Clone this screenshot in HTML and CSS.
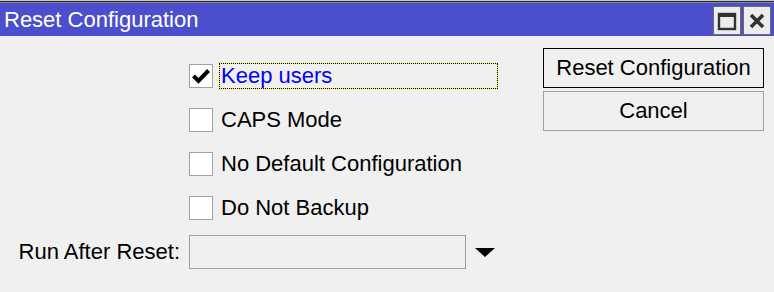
FILE: index.html
```html
<!DOCTYPE html>
<html lang="en">
<head>
    <meta charset="UTF-8">
    <meta name="viewport" content="width=device-width, initial-scale=1.0">
    <title>Reset Configuration</title>
    <link rel="stylesheet" href="styles.css">
</head>
<body>
    <div class="window">
        <div class="window-edge"></div>
        <div class="title-bar">
            <span class="title-text">Reset Configuration</span>
            <div class="title-buttons">
                <button class="title-button">
                    <svg width="20" height="20" viewBox="0 0 20 20">
                        <rect x="2" y="3" width="16" height="15" fill="none" stroke="#333" stroke-width="2.4"/>
                        <rect x="1" y="2" width="18" height="4" fill="#333"/>
                    </svg>
                </button>
                <button class="title-button">
                    <svg width="20" height="20" viewBox="0 0 20 20">
                        <path d="M4 4 L16 16 M16 4 L4 16" stroke="#333" stroke-width="3.6"/>
                    </svg>
                </button>
            </div>
        </div>

        <div class="window-body">
            <div class="form">
                <div class="form-row">
                    <span class="form-label"></span>
                    <div class="check-item">
                        <span class="check-box">
                            <svg width="18" height="18" viewBox="0 0 18 18">
                                <path d="M1.5 9 L6.5 14 L16.5 3.5" fill="none" stroke="#000" stroke-width="4"/>
                            </svg>
                        </span>
                        <span class="check-label focused">Keep users</span>
                    </div>
                </div>
                <div class="form-row">
                    <span class="form-label"></span>
                    <div class="check-item">
                        <span class="check-box"></span>
                        <span class="check-label">CAPS Mode</span>
                    </div>
                </div>
                <div class="form-row">
                    <span class="form-label"></span>
                    <div class="check-item">
                        <span class="check-box"></span>
                        <span class="check-label">No Default Configuration</span>
                    </div>
                </div>
                <div class="form-row">
                    <span class="form-label"></span>
                    <div class="check-item">
                        <span class="check-box"></span>
                        <span class="check-label">Do Not Backup</span>
                    </div>
                </div>
                <div class="form-row">
                    <span class="form-label">Run After Reset:</span>
                    <div class="select-item">
                        <div class="select-field"></div>
                        <span class="select-arrow"></span>
                    </div>
                </div>
            </div>

            <div class="actions">
                <button class="action-button primary">Reset Configuration</button>
                <button class="action-button">Cancel</button>
            </div>
        </div>
    </div>
</body>
</html>
```

FILE: styles.css
```css
body {
    margin: 0;
    font-family: "Liberation Sans", Arial, sans-serif;
    font-size: 22px;
    background-color: #f0f0f0;
    color: #000;
}

.window {
    width: 774px;
    height: 292px;
    overflow: hidden;
}

.window-edge {
    height: 3px;
    background: linear-gradient(#c8c8c8 0 1px, #2a2a2a 1px 2px, #8a8a8a 2px 3px);
}

.title-bar {
    height: 33px;
    background-color: #4b4fcd;
    display: flex;
    align-items: center;
    justify-content: space-between;
    padding-left: 4px;
}

.title-text {
    color: #fff;
    font-size: 22px;
}

.title-buttons {
    display: flex;
    gap: 2px;
    padding-right: 3px;
    padding-top: 2px;
}

.title-button {
    width: 28px;
    height: 29px;
    padding: 0;
    border: 1px solid #6b6b6b;
    background-color: #ededed;
    display: flex;
    align-items: center;
    justify-content: center;
}

.window-body {
    display: flex;
    justify-content: space-between;
}

.form {
    padding-top: 18px;
}

.form-row {
    display: grid;
    grid-template-columns: 180px auto;
    column-gap: 9px;
    height: 44px;
    align-items: center;
}

.form-label {
    text-align: right;
}

.check-item {
    display: flex;
    align-items: center;
    gap: 6px;
}

.check-box {
    width: 22px;
    height: 22px;
    border: 1px solid #a0a0a0;
    background-color: #fff;
    display: flex;
    align-items: center;
    justify-content: center;
}

.check-label {
    display: block;
    height: 24px;
    line-height: 24px;
    padding-left: 1px;
    border: 1px solid transparent;
}

.check-label.focused {
    width: 276px;
    color: #0000ff;
    border-color: #ffff00;
    outline: 1px dotted #000;
    outline-offset: -1px;
}

.select-item {
    display: flex;
    align-items: center;
    gap: 9px;
}

.select-field {
    width: 275px;
    height: 32px;
    border: 1px solid #a0a0a0;
    background-color: #f0f0f0;
}

.select-arrow {
    width: 0;
    height: 0;
    border-left: 10px solid transparent;
    border-right: 10px solid transparent;
    border-top: 9px solid #000;
}

.actions {
    display: flex;
    flex-direction: column;
    gap: 3px;
    padding-top: 12px;
    padding-right: 10px;
}

.action-button {
    width: 221px;
    height: 40px;
    font-family: inherit;
    font-size: 22px;
    color: #000;
    background-color: #f0f0f0;
    border: 1px solid #a0a0a0;
    padding: 0;
}

.action-button.primary {
    border-color: #000;
}
```
